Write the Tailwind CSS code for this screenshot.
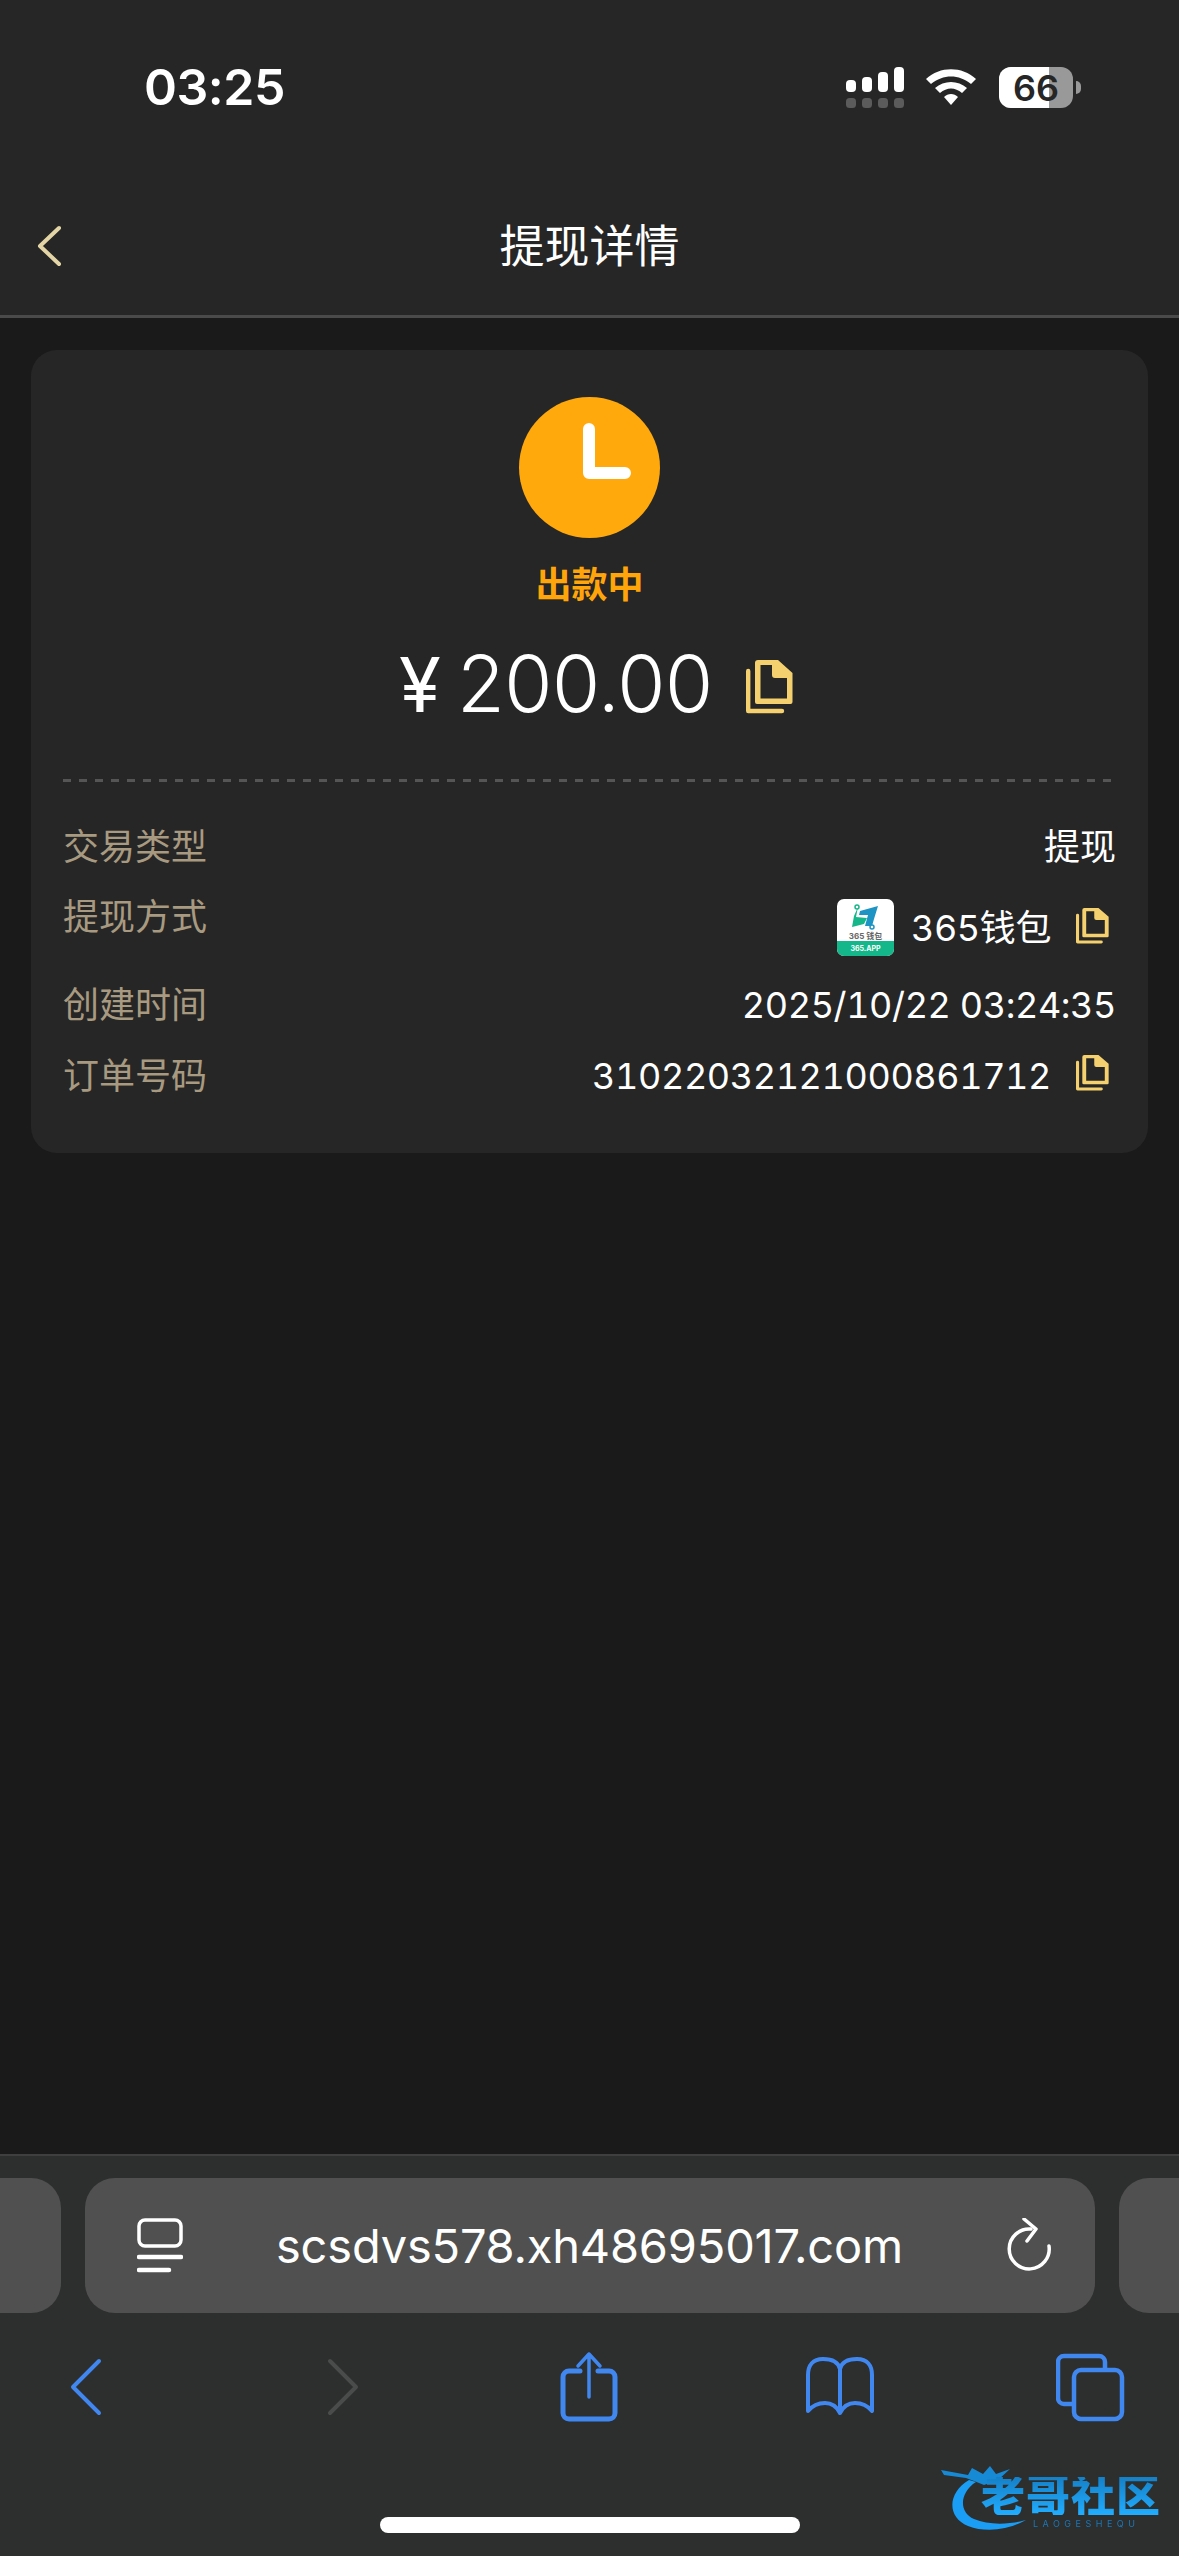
<!DOCTYPE html>
<html lang="zh">
<head>
<meta charset="utf-8">
<script src="https://cdn.jsdelivr.net/npm/@tailwindcss/browser@4"></script>
</head>
<body class="bg-[#1a1a1a]">
<div class="relative w-[1179px] h-[2556px] overflow-hidden flex flex-col bg-[#1a1a1a] text-white font-['Inter','Noto_Sans_CJK_SC',sans-serif]">

  <header class="bg-[#262626] border-b-[3px] border-[#4a4a4a] pb-[13px]">
    <div class="h-[190px] pt-[67px] pl-[144px] pr-[98px] flex justify-between items-start">
      <span class="text-[50px] leading-[41px] font-semibold tracking-[-0.5px]">03:25</span>
      <div class="flex items-start">
        <svg class="w-[60px] h-[41px]" viewBox="0 0 60 41">
          <g fill="#fff"><rect x="1" y="13" width="10" height="12" rx="4"/><rect x="17" y="10" width="10" height="15" rx="4"/><rect x="33" y="5" width="10" height="20" rx="4"/><rect x="49" y="0" width="10" height="25" rx="4"/></g>
          <g fill="#5b5b5b"><rect x="1" y="31" width="10" height="10" rx="3.5"/><rect x="17" y="31" width="10" height="10" rx="3.5"/><rect x="33" y="31" width="10" height="10" rx="3.5"/><rect x="49" y="31" width="10" height="10" rx="3.5"/></g>
        </svg>
        <svg class="ml-[20px] w-[52px] h-[41px]" viewBox="0 0 52 41">
          <path d="M1 12 C15 -1 37 -1 51 12 L46 17 C34 7 18 7 6 17 Z" fill="#fff"/>
          <path d="M10 21 C19 13 33 13 42 21 L37 26 C30 20 22 20 15 26 Z" fill="#fff"/>
          <path d="M19 30 C23 26 29 26 33 30 L26 38 Z" fill="#fff"/>
        </svg>
        <div class="ml-[22px] relative w-[74px] h-[41px] rounded-[12px] overflow-hidden bg-[#999999] flex">
          <div class="w-[50px] h-full bg-white"></div>
          <span class="absolute inset-0 flex items-center justify-center text-[36px] leading-none font-semibold text-[#262626]">66</span>
        </div>
        <div class="ml-[3px] mt-[14px] w-[5px] h-[13px] bg-[#999999] rounded-r-full"></div>
      </div>
    </div>
    <div class="relative h-[112px] flex items-center justify-center">
      <svg class="absolute left-[36px] top-[35px] w-[28px] h-[42px]" viewBox="0 0 28 42" fill="none" stroke="#e3d5a5" stroke-width="4" stroke-linecap="round" stroke-linejoin="round"><path d="M23 3 L4 21 L23 39"/></svg>
      <h1 class="text-[45px] leading-none font-normal">提现详情</h1>
    </div>
  </header>

  <main class="flex-1 px-[31px] pt-[32px]">
    <section class="bg-[#262626] rounded-[26px] h-[803px] pt-[47px] px-[32px] flex flex-col">
      <div class="self-center w-[141px] h-[141px] rounded-full bg-[#ffa90d] flex items-center justify-center">
        <svg class="w-[141px] h-[141px]" viewBox="0 0 141 141" fill="none" stroke="#fff" stroke-width="12" stroke-linecap="round" stroke-linejoin="round"><path d="M70 32 V76 H106"/></svg>
      </div>
      <div class="mt-[29px] text-center text-[36px] leading-[36px] font-bold text-[#ffa50a]">出款中</div>
      <div class="mt-[39px] ml-[336px] flex items-center h-[84px]">
        <span class="text-[76px] leading-none w-[58px]">¥</span>
        <span class="text-[78px] leading-none font-light tracking-[-0.5px]">200.00</span>
        <svg class="ml-[33px] mt-[6px] w-[47px] h-[54px]" viewBox="0 0 47 54">
          <path d="M2.2 11 V51 H36" fill="none" stroke="#f5d06f" stroke-width="4.4" stroke-linecap="round" stroke-linejoin="round"/>
          <path fill="#f5d06f" fill-rule="evenodd" d="M12 0 H32 L46.500 13 V42 a2 2 0 0 1 -2 2 H11 a2 2 0 0 1 -2 -2 V3 a3 3 0 0 1 3 -3 Z M14.500 5 V38.500 H41 V18 H29 a3 3 0 0 1 -3 -3 V5 Z"/>
        </svg>
      </div>
      <div class="mt-[53px] h-[3px] bg-[repeating-linear-gradient(90deg,#555555_0_8px,transparent_8px_16px)]"></div>

      <div class="mt-[43px] flex justify-between items-center h-[44px]">
        <span class="text-[36px] leading-none text-[#a89a80]">交易类型</span>
        <span class="text-[36px] leading-none">提现</span>
      </div>
      <div class="mt-[22px] flex justify-between items-start h-[91px]">
        <span class="mt-[4px] text-[36px] leading-[44px] text-[#a89a80]">提现方式</span>
        <div class="mt-[8px] flex items-center">
          <div class="w-[57px] h-[57px] rounded-[7px] overflow-hidden bg-white flex flex-col items-center">
            <svg class="mt-[5px] w-[30px] h-[26px]" viewBox="0 0 30 26" fill="none">
              <path d="M8 3 L6 13 L17 14 L14 20 L2 23 L4 12" fill="#15b78a"/>
              <path d="M10 7 L28 2 L24 15 L22 22 L15 22 L18 11 L9 11 Z" fill="#1e94c4"/>
              <circle cx="7" cy="3" r="2" stroke="#15b78a" stroke-width="1.500" fill="#fff"/>
              <circle cx="22" cy="23" r="2" stroke="#1e94c4" stroke-width="1.500" fill="#fff"/>
            </svg>
            <span class="text-[8px] leading-[9px] font-bold text-[#666666] mt-[2px]">365 钱包</span>
            <div class="mt-auto w-full h-[15px] bg-[#14b789] flex items-center justify-center text-[7px] leading-none font-bold text-white">365.APP</div>
          </div>
          <span class="ml-[17px] text-[36px] leading-none tabular-nums tracking-[-0.4px]">365钱包</span>
          <svg class="ml-[25px] mr-[7px] -mt-[3px] w-[33px] h-[36px]" viewBox="0 0 47 54" preserveAspectRatio="none">
            <path d="M2.2 11 V51 H36" fill="none" stroke="#f5d06f" stroke-width="4.4" stroke-linecap="round" stroke-linejoin="round"/>
            <path fill="#f5d06f" fill-rule="evenodd" d="M12 0 H32 L46.500 13 V42 a2 2 0 0 1 -2 2 H11 a2 2 0 0 1 -2 -2 V3 a3 3 0 0 1 3 -3 Z M14.500 5 V38.500 H41 V18 H29 a3 3 0 0 1 -3 -3 V5 Z"/>
          </svg>
        </div>
      </div>
      <div class="flex justify-between items-center h-[44px] mt-[1px]">
        <span class="text-[36px] leading-none text-[#a89a80]">创建时间</span>
        <span class="text-[36px] leading-none tabular-nums tracking-[-0.4px]">2025/10/22 03:24:35</span>
      </div>
      <div class="mt-[27px] flex justify-between items-center h-[44px]">
        <span class="text-[36px] leading-none text-[#a89a80]">订单号码</span>
        <div class="flex items-center">
          <span class="text-[36px] leading-none tabular-nums tracking-[-0.4px]">31022032121000861712</span>
          <svg class="ml-[25px] mr-[7px] -mt-[6px] w-[33px] h-[36px]" viewBox="0 0 47 54" preserveAspectRatio="none">
            <path d="M2.2 11 V51 H36" fill="none" stroke="#f5d06f" stroke-width="4.4" stroke-linecap="round" stroke-linejoin="round"/>
            <path fill="#f5d06f" fill-rule="evenodd" d="M12 0 H32 L46.500 13 V42 a2 2 0 0 1 -2 2 H11 a2 2 0 0 1 -2 -2 V3 a3 3 0 0 1 3 -3 Z M14.500 5 V38.500 H41 V18 H29 a3 3 0 0 1 -3 -3 V5 Z"/>
          </svg>
        </div>
      </div>
    </section>
  </main>

  <footer class="relative h-[402px] bg-[#2d2e2e] border-t-2 border-[#3f3f3f] pt-[22px]">
    <div class="flex gap-[24px] -mx-[951px] justify-center">
      <div class="w-[1010px] h-[135px] shrink-0 rounded-[30px] bg-[#4f504f]"></div>
      <div class="w-[1010px] h-[135px] shrink-0 rounded-[30px] bg-[#4f504f] flex items-center pl-[52px] pr-[42px]">
        <svg class="w-[46px] h-[56px] shrink-0" viewBox="0 0 46 56" fill="none" stroke="#fff" stroke-linecap="round">
          <rect x="2" y="2" width="42" height="26" rx="6" stroke-width="3.500"/>
          <path d="M2 39 H44 M2 52 H32" stroke-width="4.500"/>
        </svg>
        <span class="flex-1 mr-[10px] text-center text-[47px] leading-none tracking-[-0.2px]">scsdvs578.xh48695017.com</span>
        <svg class="w-[46px] h-[56px] shrink-0" viewBox="0 0 46 56" fill="none" stroke="#fff" stroke-width="3.500" stroke-linecap="round" stroke-linejoin="round">
          <path d="M24 11 A20 20 0 1 0 42 28"/>
          <path d="M17 1 L29 11 L20 23"/>
        </svg>
      </div>
      <div class="w-[1010px] h-[135px] shrink-0 rounded-[30px] bg-[#4f504f]"></div>
    </div>

    <div class="mt-[38px] pl-[51px] pr-[53px] flex justify-between">
      <svg class="w-[70px] h-[72px]" viewBox="0 0 70 72" fill="none" stroke="#4088f0" stroke-width="4" stroke-linecap="round" stroke-linejoin="round"><path d="M48 10 L22 36 L48 62"/></svg>
      <svg class="w-[70px] h-[72px]" viewBox="0 0 70 72" fill="none" stroke="#4a4b4b" stroke-width="4" stroke-linecap="round" stroke-linejoin="round"><path d="M28 10 L54 36 L28 62"/></svg>
      <svg class="w-[70px] h-[72px]" viewBox="0 0 70 72" fill="none" stroke="#4088f0" stroke-linecap="round" stroke-linejoin="round">
        <path d="M26 20 H15 a6 6 0 0 0 -6 6 V62 a6 6 0 0 0 6 6 H55 a6 6 0 0 0 6 -6 V26 a6 6 0 0 0 -6 -6 H44" stroke-width="5"/>
        <path d="M35 46 V3 M24 15 L35 3 L46 15" stroke-width="3.500"/>
      </svg>
      <svg class="w-[70px] h-[72px]" viewBox="0 0 70 72" fill="none" stroke="#4088f0" stroke-width="4" stroke-linejoin="round">
        <path d="M35 18 C33 10 26 8 18 8 C8 8 3 14 3 24 V60 C8 54 14 52 20 52 C27 52 32 56 35 62 C38 56 43 52 50 52 C56 52 62 54 67 60 V24 C67 14 62 8 52 8 C44 8 37 10 35 18 V62"/>
      </svg>
      <svg class="w-[70px] h-[72px]" viewBox="0 0 70 72" fill="none" stroke="#4088f0" stroke-width="4.500" stroke-linejoin="round">
        <path d="M17 53 H8 a6 6 0 0 1 -6 -6 V11 a6 6 0 0 1 6 -6 H43 a6 6 0 0 1 6 6 V19"/>
        <rect x="18" y="19" width="48" height="49" rx="7"/>
      </svg>
    </div>

    <div class="absolute left-[380px] top-[361px] w-[420px] h-[16px] rounded-full bg-white"></div>

    <div class="absolute left-[938px] top-[306px] w-[230px] h-[72px] blur-[0.6px]">
      <svg class="absolute left-0 top-0 w-[110px] h-[72px]" viewBox="0 0 110 72">
        <path d="M31 18 C10 30 8 55 30 64 C48 71 70 68 88 58 C70 63 50 63 36 57 C20 50 22 30 38 20 Z" fill="#1a9ef5"/>
        <path d="M3 8 L30 13 L34 6 L45 12 L52 4 L58 12 L72 7 L60 18 L46 23 L36 19 L28 16 L6 13 Z" fill="#178ad6"/>
      </svg>
      <span class="absolute left-[43px] top-[15px] text-[44px] leading-[38px] font-black tracking-[1px] whitespace-nowrap bg-gradient-to-b from-[#1580c8] to-[#22adff] bg-clip-text text-transparent">老哥社区</span>
      <span class="absolute left-[95px] top-[57px] text-[9px] leading-none tracking-[4.5px] text-[#1a78b8] whitespace-nowrap">LAOGESHEQU</span>
    </div>
  </footer>
</div>
</body>
</html>
